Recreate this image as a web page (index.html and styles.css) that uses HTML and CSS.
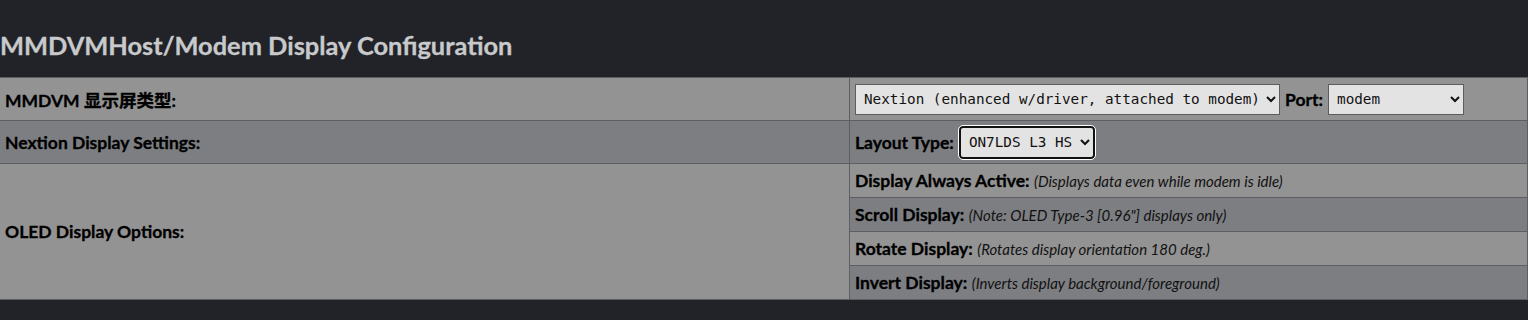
FILE: index.html
```html
<!DOCTYPE html>
<html lang="zh">
<head>
    <meta charset="UTF-8">
    <title>MMDVMHost/Modem Display Configuration</title>
    <link rel="stylesheet" href="styles.css">
</head>
<body>
    <div class="header">
        <h2 class="title">MMDVMHost/Modem Display Configuration</h2>
    </div>
    <table class="config">
        <tr class="light">
            <td class="label">MMDVM 显示屏类型:</td>
            <td>
                <div class="field">
                    <select class="sel sel-display">
                        <option>Nextion (enhanced w/driver, attached to modem)</option>
                    </select>
                    <b>Port:</b>
                    <select class="sel sel-port">
                        <option>modem</option>
                    </select>
                </div>
            </td>
        </tr>
        <tr class="dark">
            <td class="label">Nextion Display Settings:</td>
            <td>
                <div class="field">
                    <b>Layout Type:</b>
                    <select class="sel sel-layout">
                        <option>ON7LDS L3 HS</option>
                    </select>
                </div>
            </td>
        </tr>
        <tr class="light sub">
            <td class="label" rowspan="4">OLED Display Options:</td>
            <td><b>Display Always Active:</b> <i>(Displays data even while modem is idle)</i></td>
        </tr>
        <tr class="dark sub">
            <td><b>Scroll Display:</b> <i>(Note: OLED Type-3 [0.96"] displays only)</i></td>
        </tr>
        <tr class="light sub">
            <td><b>Rotate Display:</b> <i>(Rotates display orientation 180 deg.)</i></td>
        </tr>
        <tr class="dark sub">
            <td><b>Invert Display:</b> <i>(Inverts display background/foreground)</i></td>
        </tr>
    </table>
</body>
</html>
```

FILE: styles.css
```css
body {
    margin: 0;
    background-color: #212328;
    font-family: Lato, "Noto Sans CJK SC", sans-serif;
    color: #000;
}

.header {
    height: 77px;
    display: flex;
    align-items: flex-end;
}

.title {
    margin: 0 0 16px 0;
    font-size: 25.4px;
    font-weight: bold;
    color: #c8c9cb;
    line-height: 32px;
    -webkit-text-stroke: 0.3px #c8c9cb;
}

.config {
    width: 100%;
    border-collapse: collapse;
    font-size: 17.5px;
}

.config td {
    border: 1px solid #5c5e62;
    padding: 0 5px;
    height: 42px;
    text-align: left;
    vertical-align: middle;
}

.config td.label {
    width: 839px;
    border-left: none;
    font-weight: bold;
    background-color: #939393;
}

.config b,
.config td.label {
    -webkit-text-stroke: 0.3px #000;
}

.config tr.light td {
    background-color: #939393;
}

.config tr.dark td {
    background-color: #7d7e82;
}

.config tr.sub td {
    height: 33px;
}

.config i {
    font-size: 15px;
    color: #111;
}

.field {
    display: flex;
    align-items: center;
    gap: 5px;
}

.sel {
    font-family: "DejaVu Sans Mono", monospace;
    font-size: 14.3px;
    height: 31px;
    background-color: #e3e3e3;
    border: 1px solid #5c5e62;
    color: #111;
    padding: 0 4px;
}

.sel-display {
    width: 425px;
}

.sel-port {
    width: 136px;
}

.sel-layout {
    width: 136px;
    height: 33px;
    border: 2px solid #111;
    border-radius: 4px;
    outline: 1px solid #fff;
}
```
